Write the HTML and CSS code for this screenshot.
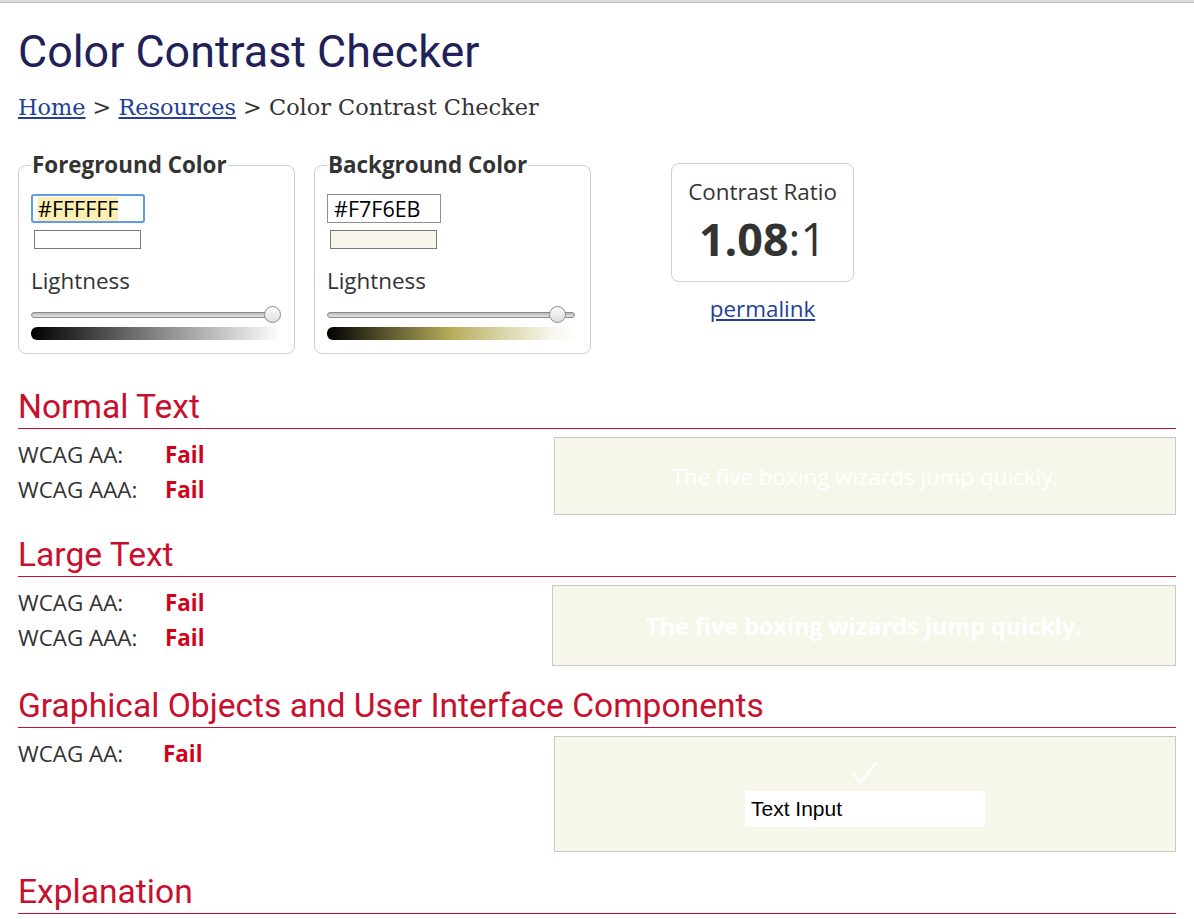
FILE: index.html
```html
<!DOCTYPE html>
<html lang="en">
<head>
<meta charset="utf-8">
<title>Color Contrast Checker</title>
<link rel="stylesheet" href="styles.css">
</head>
<body>
<div class="topbar"></div>
<div class="page">
  <h1 class="title">Color Contrast Checker</h1>
  <nav class="crumbs"><a href="#">Home</a> &gt; <a href="#">Resources</a> &gt; Color Contrast Checker</nav>

  <div class="pickers">
    <fieldset class="picker">
      <legend>Foreground Color</legend>
      <div class="hex hex--focus"><span class="sel">#FFFFFF</span></div>
      <div class="swatch swatch--fg"></div>
      <div class="label">Lightness</div>
      <div class="track"><span class="thumb thumb--fg"></span></div>
      <div class="grad grad--fg"></div>
    </fieldset>
    <fieldset class="picker picker--bg">
      <legend>Background Color</legend>
      <div class="hex">#F7F6EB</div>
      <div class="swatch swatch--bg"></div>
      <div class="label">Lightness</div>
      <div class="track"><span class="thumb thumb--bg"></span></div>
      <div class="grad grad--bg"></div>
    </fieldset>
    <div class="ratio-col">
      <div class="ratio">
        <div class="ratio-label">Contrast Ratio</div>
        <div class="ratio-value"><b>1.08</b>:1</div>
      </div>
      <a class="permalink" href="#">permalink</a>
    </div>
  </div>

  <section class="result result--first">
    <h2 class="result-title">Normal Text</h2>
    <div class="result-body">
      <div class="levels">
        <div class="level"><span class="lvl-name">WCAG AA:</span><span class="fail">Fail</span></div>
        <div class="level"><span class="lvl-name">WCAG AAA:</span><span class="fail">Fail</span></div>
      </div>
      <div class="sample sample--normal">The five boxing wizards jump quickly.</div>
    </div>
  </section>

  <section class="result">
    <h2 class="result-title">Large Text</h2>
    <div class="result-body result-body--large">
      <div class="levels">
        <div class="level"><span class="lvl-name">WCAG AA:</span><span class="fail">Fail</span></div>
        <div class="level"><span class="lvl-name">WCAG AAA:</span><span class="fail">Fail</span></div>
      </div>
      <div class="sample sample--large">The five boxing wizards jump quickly.</div>
    </div>
  </section>

  <section class="result">
    <h2 class="result-title">Graphical Objects and User Interface Components</h2>
    <div class="result-body">
      <div class="levels">
        <div class="level"><span class="lvl-name lvl-name--narrow">WCAG AA:</span><span class="fail">Fail</span></div>
      </div>
      <div class="sample sample--ui">
        <svg class="check" width="26" height="24" viewBox="0 0 26 24"><path d="M2 13 L8 22 L24 2" fill="none" stroke="#fff" stroke-width="2.4" stroke-linecap="round" stroke-linejoin="round"/></svg>
        <div class="text-input">Text Input</div>
      </div>
    </div>
  </section>

  <section class="result">
    <h2 class="result-title">Explanation</h2>
  </section>
</div>
</body>
</html>
```
FILE: styles.css
```css
html, body {
  margin: 0;
  background: #fff;
}
body {
  font-family: "Open Sans", sans-serif;
  font-size: 22.4px;
  color: #333;
}
.topbar {
  height: 2px;
  background: #dadada;
  border-bottom: 1px solid #bcbcbc;
}
.page {
  padding: 0 18px;
}
.title {
  margin: 21px 0 0;
  font: 400 44.8px/56px Roboto, sans-serif;
  color: #1f2158;
}
.crumbs {
  margin-top: 12px;
  font: 22.4px/30px "DejaVu Serif", serif;
  color: #333;
}
.crumbs a {
  color: #233f96;
}
.pickers {
  display: flex;
  align-items: flex-start;
  margin-top: 29px;
}
.picker {
  margin: 0;
  min-width: 0;
  width: 277px;
  box-sizing: border-box;
  border: 1px solid #cfcfcf;
  border-radius: 8px;
  padding: 15px 12px 13px 12px;
}
.picker--bg {
  margin-left: 19px;
}
.picker legend {
  font-weight: 700;
  font-size: 22.4px;
  line-height: 28px;
  padding: 0 1px;
  color: #333;
}
.hex {
  width: 114px;
  height: 29px;
  box-sizing: border-box;
  border: 1px solid #8f8f8f;
  padding: 0 6px;
  font-size: 21.5px;
  line-height: 27px;
  color: #000;
}
.hex--focus {
  border: 2px solid #5c9ce8;
  border-radius: 3px;
  padding: 0 5px;
  line-height: 25px;
}
.sel {
  display: inline-block;
  background: #fdefb2;
  line-height: 24px;
}
.swatch {
  margin: 7px 0 0 3px;
  width: 107px;
  height: 19px;
  box-sizing: border-box;
  border: 1px solid #777;
}
.swatch--fg {
  background: #fff;
}
.swatch--bg {
  background: #f7f6eb;
}
.label {
  margin-top: 18px;
  line-height: 28px;
}
.track {
  position: relative;
  margin-top: 17px;
  width: 248px;
  height: 6px;
  box-sizing: border-box;
  border: 1px solid #8a8a8a;
  border-radius: 3px;
  background: linear-gradient(#b9b9b9, #e4e4e4);
}
.thumb {
  position: absolute;
  top: -7px;
  width: 17px;
  height: 17px;
  box-sizing: border-box;
  border: 1px solid #8c8c8c;
  border-radius: 50%;
  background: linear-gradient(#fbfbfb, #dedede);
}
.thumb--fg {
  left: 232px;
}
.thumb--bg {
  left: 221px;
}
.grad {
  margin-top: 9px;
  width: 250px;
  height: 13px;
  border-radius: 6px 0 0 6px;
}
.grad--fg {
  background: linear-gradient(to right, #000, #777 45%, #fff);
}
.grad--bg {
  background: linear-gradient(to right, #000 0%, #5f5a30 25%, #b7ad5c 50%, #dcd8ae 72%, #f7f6eb 90%, #fff 100%);
}
.ratio-col {
  margin-left: 80px;
  margin-top: 12px;
  width: 183px;
  display: flex;
  flex-direction: column;
  align-items: center;
}
.ratio {
  width: 183px;
  height: 119px;
  box-sizing: border-box;
  border: 1px solid #cfcfcf;
  border-radius: 8px;
  padding-top: 14px;
  text-align: center;
}
.ratio-label {
  line-height: 28px;
}
.ratio-value {
  margin-top: 7px;
  font-size: 44.8px;
  line-height: 52px;
}
.ratio-value b {
  font-weight: 700;
}
.permalink {
  margin-top: 13px;
  line-height: 28px;
  color: #233f96;
}
.result {
  margin-top: 21px;
}
.result--first {
  margin-top: 34px;
}
.result-title {
  margin: 0;
  padding-bottom: 3px;
  border-bottom: 1px solid #c8102e;
  font: 400 33.6px/37px Roboto, sans-serif;
  color: #c8102e;
}
.result-body {
  display: grid;
  grid-template-columns: 536px 1fr;
  margin-top: 8px;
}
.result-body--large {
  grid-template-columns: 534px 1fr;
}
.level {
  display: flex;
  line-height: 35px;
}
.lvl-name {
  width: 147px;
  flex: none;
}
.lvl-name--narrow {
  width: 145px;
}
.fail {
  font-weight: 700;
  color: #d0021b;
}
.sample {
  box-sizing: border-box;
  border: 1px solid #c9c9c9;
  background: #f7f6eb;
  color: #fff;
  display: flex;
  align-items: center;
  justify-content: center;
}
.sample--normal {
  height: 78px;
}
.sample--large {
  height: 81px;
  font-size: 23.4px;
  font-weight: 700;
}
.sample--ui {
  height: 116px;
  flex-direction: column;
  justify-content: flex-start;
  padding-top: 24px;
}
.check {
  display: block;
}
.text-input {
  margin-top: 6px;
  width: 240px;
  height: 36px;
  box-sizing: border-box;
  background: #fff;
  padding-left: 6px;
  font: 21px/36px "Liberation Sans", Arial, sans-serif;
  color: #000;
}
```
